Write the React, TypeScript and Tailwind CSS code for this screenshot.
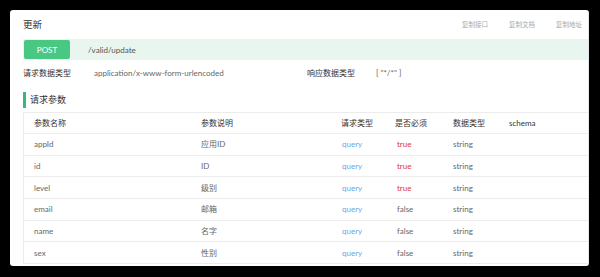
const rows = [
  { name: "appId", desc: "应用ID", required: true },
  { name: "id", desc: "ID", required: true },
  { name: "level", desc: "级别", required: true },
  { name: "email", desc: "邮箱", required: false },
  { name: "name", desc: "名字", required: false },
  { name: "sex", desc: "性别", required: false },
];

const font = { fontFamily: '"Lato", "Noto Sans CJK SC", sans-serif' };

export default function App() {
  return (
    <div className="min-h-[277px] bg-black p-[10px]" style={font}>
      <div className="h-[256px] w-[579px] overflow-hidden rounded-[3px] border-r border-gray-200 bg-white pl-[13px]">
        <div className="flex h-[29px] items-center justify-between pr-[6px]">
          <h2 className="text-[9.5px] leading-[14px] text-[#333]">更新</h2>
          <div className="flex gap-[21px] text-[6.5px] leading-[10px] text-[#a8a8a8]">
            <span>复制接口</span>
            <span>复制文档</span>
            <span>复制地址</span>
          </div>
        </div>

        <div className="flex h-[21px] w-[600px] items-center bg-[#e8f6ef] pl-[1px]">
          <span className="flex h-[19px] w-[46px] items-center justify-center rounded-[2px] bg-[#49c884] text-[8px] text-white">
            POST
          </span>
          <span className="ml-[18px] text-[8px] text-[#555]">/valid/update</span>
        </div>

        <div className="flex h-[26px] items-center text-[8px] text-[#666]">
          <span className="w-[71px] text-[#333]">请求数据类型</span>
          <span className="w-[213px]">application/x-www-form-urlencoded</span>
          <span className="w-[69px] text-[#333]">响应数据类型</span>
          <span>[ "*/*" ]</span>
        </div>

        <div className="mt-[6px] flex h-[16px] items-center border-l-[3px] border-[#3ab77a] pl-[4px] text-[9px] text-[#333]">
          请求参数
        </div>

        <div className="mt-[4px] w-[600px] border-t border-l border-[#ececec] text-[8px]">
          <div className="flex h-[21px] items-center border-b border-[#ececec] pl-[10px] text-[#333]">
            <span className="w-[167px]">参数名称</span>
            <span className="w-[140px]">参数说明</span>
            <span className="w-[54px]">请求类型</span>
            <span className="w-[58px]">是否必须</span>
            <span className="w-[56px]">数据类型</span>
            <span>schema</span>
          </div>
          {rows.map((r) => (
            <div
              key={r.name}
              className="flex h-[21.7px] items-center border-b border-[#ececec] pl-[10px] text-[#666]"
            >
              <span className="w-[167px]">{r.name}</span>
              <span className="w-[140px]">{r.desc}</span>
              <span className="w-[54px] pl-[1px] text-[#6aa6e0]">query</span>
              <span className={`w-[58px] pl-[2px] ${r.required ? "text-[#d9363e]" : "text-[#666]"}`}>
                {r.required ? "true" : "false"}
              </span>
              <span className="w-[56px]">string</span>
              <span></span>
            </div>
          ))}
        </div>
      </div>
    </div>
  );
}
